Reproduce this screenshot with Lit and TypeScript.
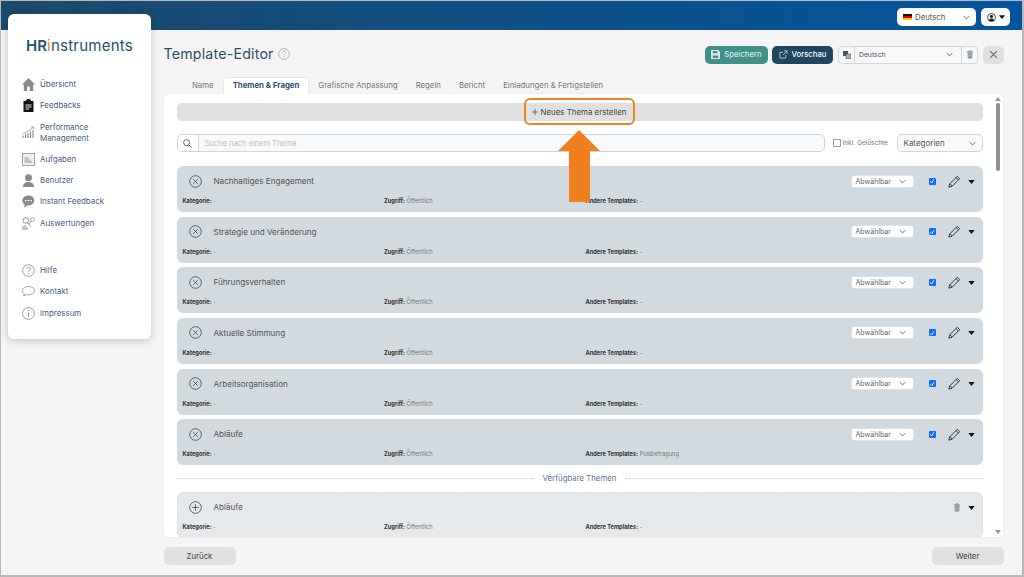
import { LitElement, html, css, svg } from "lit";
import { customElement } from "lit/decorators.js";

const chevron = html`<svg class="chev" viewBox="0 0 10 6"><path d="M1 1l4 4 4-4" fill="none" stroke="currentColor" stroke-width="1.2"/></svg>`;
const caret = html`<svg class="caret" viewBox="0 0 8 5"><path d="M0 0h8L4 5z" fill="#111"/></svg>`;
const pencil = html`<svg class="pencil" viewBox="0 0 12 12"><path d="M8.600 1.200l2.200 2.200-7 7-3 .8.8-3zM7.400 2.400l2.200 2.200M1.800 8l2.200 2.200" fill="none" stroke="#333" stroke-width=".9"/></svg>`;
const trash = html`<svg class="trash" viewBox="0 0 10 11"><path d="M1 2.200h8M3.500 2V1h3v1" fill="none" stroke="#777" stroke-width=".9"/><path d="M1.800 3h6.400l-.5 7.500H2.300z" fill="#8b8f93"/><path d="M3.800 4.500v4.500M6.200 4.500v4.500" stroke="#e7eaed" stroke-width=".6"/></svg>`;

const navIcons: Record<string, unknown> = {
  home: svg`<path d="M6.500 0L0 6.500h1.800V13h3.400V8.500h2.600V13h3.400V6.500H13z" fill="#8a8a8a"/>`,
  clip: svg`<path d="M1.500 2h2.300C4 .8 5 0 6.500 0S9 .8 9.200 2h2.300v11h-10z" fill="#111"/><path d="M3.500 6h6M3.500 8h6M3.500 10h3.500" stroke="#fff" stroke-width=".9"/>`,
  chart: svg`<path d="M1 12V9.500M3.500 12V8M6 12V7M8.500 12V5.500M11 12V4" stroke="#8a8a8a" stroke-width="1.100"/><path d="M.5 7.500C4 6.500 8 4.500 11.500 1M9 1h2.700v2.500" fill="none" stroke="#8a8a8a" stroke-width=".7"/>`,
  doc: svg`<rect x=".5" y=".5" width="12" height="12" fill="#f1f1f1" stroke="#8a8a8a" stroke-width=".8"/><path d="M2.500 5h4M2.500 7h6M2.500 9h7.500" stroke="#8a8a8a" stroke-width=".9"/>`,
  user: svg`<circle cx="6.500" cy="3.700" r="3.500" fill="#8a8a8a"/><path d="M1 13c0-3.500 2-5 5.500-5s5.500 1.500 5.500 5z" fill="#8a8a8a"/>`,
  chat: svg`<path d="M6.500.5C3 .5.300 2.700.300 5.600c0 1.700.9 3.100 2.300 4l-.4 3 3-2.100c.2 0 .5.100.8.100 3.500 0 6.200-2.200 6.200-5S10 .5 6.500.5z" fill="#8a8a8a"/><circle cx="3.800" cy="5.600" r=".8" fill="#fff"/><circle cx="6.500" cy="5.600" r=".8" fill="#fff"/><circle cx="9.200" cy="5.600" r=".8" fill="#fff"/>`,
  ana: svg`<circle cx="3.800" cy="3.500" r="2.800" fill="none" stroke="#8a8a8a" stroke-width=".9"/><circle cx="10.500" cy="2.500" r="1.900" fill="none" stroke="#8a8a8a" stroke-width=".7"/><path d="M5.500 6l3 3.500M9.500 4l-3 3M1 13V9M3 13V8M5 13v-3" stroke="#8a8a8a" stroke-width="1"/>`,
  help: svg`<circle cx="6.500" cy="6.500" r="5.800" fill="none" stroke="#8a8a8a" stroke-width=".8"/><path d="M4.700 5c0-1.200.8-1.900 1.900-1.900s1.800.7 1.800 1.700c0 1.300-1.800 1.500-1.800 2.900" fill="none" stroke="#8a8a8a" stroke-width=".9"/><circle cx="6.600" cy="9.600" r=".6" fill="#8a8a8a"/>`,
  talk: svg`<path d="M6.500 1.500C3 1.500.4 3.300.4 5.700c0 1.300.8 2.400 2 3.100L1.600 11l2.700-1.400c.7.200 1.400.2 2.200.2 3.400 0 6.100-1.800 6.100-4.100s-2.700-4.200-6.100-4.200z" fill="none" stroke="#8a8a8a" stroke-width=".8"/>`,
  info: svg`<circle cx="6.500" cy="6.500" r="5.900" fill="none" stroke="#8a8a8a" stroke-width=".8"/><path d="M6.500 5.500v4.500" stroke="#8a8a8a" stroke-width="1"/><circle cx="6.500" cy="3.500" r=".7" fill="#8a8a8a"/>`,
};

const mainNav = [
  { icon: "home", label: "Übersicht" },
  { icon: "clip", label: "Feedbacks" },
  { icon: "chart", label: "Performance Management", tall: true },
  { icon: "doc", label: "Aufgaben" },
  { icon: "user", label: "Benutzer" },
  { icon: "chat", label: "Instant Feedback" },
  { icon: "ana", label: "Auswertungen" },
];
const helpNav = [
  { icon: "help", label: "Hilfe" },
  { icon: "talk", label: "Kontakt" },
  { icon: "info", label: "Impressum" },
];

const topics = [
  { title: "Nachhaltiges Engagement", other: "-" },
  { title: "Strategie und Veränderung", other: "-" },
  { title: "Führungsverhalten", other: "-" },
  { title: "Aktuelle Stimmung", other: "-" },
  { title: "Arbeitsorganisation", other: "-" },
  { title: "Abläufe", other: "Pulsbefragung" },
];

@customElement("app-root")
export class AppRoot extends LitElement {
  static styles = css`
    :host {
      display: block;
      position: relative;
      width: 1024px;
      height: 577px;
      overflow: hidden;
      box-sizing: border-box;
      background: #f4f4f4;
      border: solid #b9b9b9;
      border-width: 1px 2px 2px 1px;
      font-family: Inter, "Open Sans", sans-serif;
      color: #3c3f44;
    }
    svg { display: block; flex: none; }
    .topbar {
      height: 29px;
      box-sizing: border-box;
      background: linear-gradient(90deg, #1c4a6b, #03559f);
      display: flex;
      justify-content: flex-end;
      align-items: flex-start;
      gap: 5px;
      padding: 7px 12px 0 0;
    }
    .pill {
      height: 18px;
      background: #fff;
      border-radius: 5px;
      display: flex;
      align-items: center;
      box-sizing: border-box;
      font-size: 7.800px;
      color: #555;
    }
    .pill.lang { width: 79px; padding: 0 6px 0 6px; gap: 3px; }
    .flag { width: 9px; height: 6px; background: linear-gradient(#111 33%, #d00 33% 66%, #fc0 66%); }
    .pill.lang .chev { margin-left: auto; }
    .chev { width: 7px; height: 5px; color: #555; }
    .pill.user { width: 29px; padding-left: 6px; gap: 3px; }
    .caret { width: 6px; height: 4px; }
    .page { display: flex; align-items: flex-start; height: 546px; }
    .side {
      flex: none;
      width: 143px;
      height: 325px;
      margin: -16px 0 0 7px;
      background: #fff;
      border-radius: 6px;
      box-shadow: 0 2px 8px rgba(0, 0, 0, .18);
      box-sizing: border-box;
      padding: 22px 0 0 14px;
      position: relative;
    }
    .logo {
      font-size: 15px;
      color: #24536f;
      letter-spacing: .25px;
      height: 38px;
      padding-left: 4px;
      white-space: nowrap;
    }
    .logo b { font-weight: 600; letter-spacing: 0; }
    .logo i { font-style: normal; color: #ee7f22; }
    .nav { display: flex; flex-direction: column; }
    .nav.help { margin-top: 26px; }
    .nav a {
      height: 21.300px;
      display: flex;
      align-items: center;
      gap: 5px;
      font-size: 7.900px;
      line-height: 11px;
      color: #44617f;
    }
    .nav a.tall { height: 32px; }
    .nav a.tall span { width: 70px; }
    .nav svg { width: 13px; height: 13px; }
    .main { flex: 1; min-width: 0; padding: 0 0 0 6px; margin-left: 6.500px; }
    .head { display: flex; align-items: center; height: 47px; padding: 0 18px 0 0; }
    h1 {
      margin: 0;
      font-size: 14.200px;
      font-weight: 400;
      color: #2f5068;
      letter-spacing: .2px;
    }
    .q { width: 12px; height: 12px; margin-left: 4px; }
    .acts { margin: 2px 0 0 auto; display: flex; align-items: center; gap: 4px; }
    .btn {
      height: 18px;
      border-radius: 5px;
      display: flex;
      align-items: center;
      justify-content: center;
      gap: 4px;
      box-sizing: border-box;
      font-size: 7.700px;
      font-weight: 500;
      color: #fff;
    }
    .btn svg { width: 9px; height: 9px; }
    .btn.save { width: 63px; background: #41918a; color: #d6ece9; }
    .btn.prev { width: 61px; background: #1f4560; }
    .langs {
      width: 140px;
      height: 18px;
      margin-left: 1px;
      border: 1px solid #cfd8e0;
      border-radius: 4px;
      box-sizing: border-box;
      display: flex;
      background: #f6f8f9;
      font-size: 6.800px;
      color: #555;
    }
    .langs > div { display: flex; align-items: center; justify-content: center; }
    .langs .ic { width: 15px; border-right: 1px solid #cfd8e0; }
    .langs .sel { flex: 1; justify-content: space-between; padding: 0 8px 0 4px; }
    .langs .bin { width: 15px; border-left: 1px solid #cfd8e0; }
    .trash { width: 8px; height: 9px; }
    .btn.close { width: 21px; background: #e0e0e0; margin-left: 1px; }
    .tabs { display: flex; height: 17px; padding-left: 19.500px; font-size: 7.800px; color: #777; }
    .tabs span { padding: 0 9px 1.500px; display: flex; align-items: center; white-space: nowrap; }
    .tabs .on {
      background: #fff;
      border: 1px solid #e8e8e8;
      border-bottom: 0;
      border-radius: 4px 4px 0 0;
      color: #2c5270;
      font-weight: 700;
    }
    .panel {
      width: 839px;
      height: 443px;
      background: #fff;
      border-radius: 4px 4px 0 4px;
      display: flex;
      overflow: hidden;
      box-shadow: 0 0 1px rgba(0, 0, 0, .2);
    }
    .scroll { flex: 1; height: 443px; overflow: hidden; padding: 9px 10px 0 13px; box-sizing: border-box; }
    .create {
      height: 18px;
      background: #e0e0e0;
      border-radius: 5px;
      display: flex;
      align-items: center;
      justify-content: center;
      gap: 2px;
      font-size: 7.900px;
      color: #444;
      position: relative;
    }
    .create .mark {
      position: absolute;
      left: 347px;
      top: -5px;
      width: 111px;
      height: 27px;
      box-sizing: border-box;
      border: 2.500px solid #ee8322;
      border-radius: 6px;
    }
    .filter { display: flex; align-items: center; height: 18px; margin: 13px 0 14px; font-size: 6.500px; color: #777; }
    .search {
      width: 648px;
      height: 18px;
      box-sizing: border-box;
      border: 1px solid #ccd6de;
      border-radius: 5px;
      display: flex;
      background: #f8f9fa;
    }
    .search .mag { width: 20px; border-right: 1px solid #ccd6de; display: flex; align-items: center; justify-content: center; background: #fff; border-radius: 5px 0 0 5px; }
    .search .mag svg { width: 9px; height: 9px; }
    .search .ph { padding-left: 6px; font-size: 7.500px; color: #b5bec6; display: flex; align-items: center; }
    .box { width: 6px; height: 6px; border: 1px solid #999; border-radius: 1px; margin: 0 2px 0 8px; background: #fff; }
    .cats {
      margin-left: auto;
      width: 86px;
      height: 18px;
      box-sizing: border-box;
      border: 1px solid #ccd6de;
      border-radius: 5px;
      display: flex;
      align-items: center;
      justify-content: space-between;
      padding: 0 6px;
      font-size: 8px;
      color: #555;
      background: #f8f9fa;
    }
    .list { display: flex; flex-direction: column; gap: 4.670px; }
    .row { height: 46px; background: #d2d9df; border-radius: 6px; box-sizing: border-box; padding: 8px 8px 0 12px; }
    .row.free { background: #e6e9ec; border: 1px dashed #d8dde2; margin-top: 5px; padding: 7px 7px 0 11px; }
    .line { display: flex; align-items: center; height: 14px; }
    .line .circ { width: 13px; height: 13px; margin-right: 12px; }
    .line .name { font-size: 8.100px; color: #555; }
    .line .right { margin-left: auto; display: flex; align-items: center; }
    .drop {
      width: 63px;
      height: 13px;
      box-sizing: border-box;
      background: #fff;
      border: 1px solid #dde2e6;
      border-radius: 3px;
      display: flex;
      align-items: center;
      justify-content: space-between;
      padding: 0 7px 0 4px;
      font-size: 7px;
      color: #666;
    }
    .check {
      width: 7px;
      height: 7px;
      margin-left: 15px;
      background: #0d6efd;
      border-radius: 1px;
      display: flex;
      align-items: center;
      justify-content: center;
    }
    .check svg { width: 6px; height: 6px; }
    .pencil { width: 13px; height: 13px; margin-left: 12px; }
    .row .caret { margin-left: 7px; margin-top: 1px; width: 7px; }
    .meta {
      display: grid;
      grid-template-columns: repeat(3, 201.500px);
      margin: 9px 0 0 -6px;
      font-size: 5.700px;
      line-height: 8px;
      color: #777;
    }
    .meta b { color: #333; font-weight: 700; }
    .sep { display: flex; align-items: center; gap: 9px; height: 18px; font-size: 7.800px; color: #5a7590; white-space: nowrap; margin-top: 4px; }
    .sep::before, .sep::after { content: ""; flex: 1; border-top: 1px dotted #bccad6; }
    .bar { width: 10px; flex: none; display: flex; flex-direction: column; align-items: center; padding: 3px 0; box-sizing: border-box; justify-content: space-between; }
    .bar .track { flex: 1; width: 100%; margin-top: 2px; }
    .bar .thumb { width: 4px; height: 68px; border-radius: 2px; background: #8e8e8e; margin: 0 auto; }
    .bar svg { width: 6px; height: 4px; }
    .foot { display: flex; justify-content: space-between; padding: 10px 0 0 0; width: 840px; }
    .foot span {
      width: 72px;
      height: 18px;
      background: #e0e0e0;
      border-radius: 5px;
      display: flex;
      align-items: center;
      justify-content: center;
      font-size: 7.800px;
      color: #444;
    }
    .arrow { position: absolute; left: 557px; top: 129px; width: 42px; height: 72px; }
  `;

  private renderNavItem(n: { icon: string; label: string; tall?: boolean }) {
    return html`<a class=${n.tall ? "tall" : ""}>
      <svg viewBox="0 0 13 13">${navIcons[n.icon]}</svg><span>${n.label}</span>
    </a>`;
  }

  private renderMeta(other: string) {
    return html`<div class="meta">
      <div><b>Kategorie:</b> -</div>
      <div><b>Zugriff:</b> Öffentlich</div>
      <div><b>Andere Templates:</b> ${other}</div>
    </div>`;
  }

  private renderTopic(t: { title: string; other: string }) {
    return html`<div class="row">
      <div class="line">
        <svg class="circ" viewBox="0 0 13 13"><circle cx="6.500" cy="6.500" r="5.800" fill="none" stroke="#444" stroke-width=".8"/><path d="M4.300 4.300l4.400 4.400M8.700 4.300l-4.400 4.400" stroke="#444" stroke-width=".8"/></svg>
        <span class="name">${t.title}</span>
        <div class="right">
          <div class="drop">Abwählbar ${chevron}</div>
          <div class="check"><svg viewBox="0 0 8 8"><path d="M1.500 4.500l2 2 3-4.500" fill="none" stroke="#fff" stroke-width="1.300"/></svg></div>
          ${pencil} ${caret}
        </div>
      </div>
      ${this.renderMeta(t.other)}
    </div>`;
  }

  render() {
    return html`
      <div class="topbar">
        <div class="pill lang"><span class="flag"></span>Deutsch ${chevron}</div>
        <div class="pill user">
          <svg width="9" height="9" viewBox="0 0 9 9"><circle cx="4.500" cy="4.500" r="4" fill="none" stroke="#222" stroke-width=".8"/><circle cx="4.500" cy="3.400" r="1.600" fill="#222"/><path d="M1.800 7.400c.5-1.500 1.500-2 2.700-2s2.200.5 2.700 2c-1.500 1.200-3.900 1.200-5.400 0z" fill="#222"/></svg>
          ${caret}
        </div>
      </div>
      <div class="page">
        <aside class="side">
          <div class="logo"><b>HR</b><i>i</i>nstruments</div>
          <div class="nav">${mainNav.map((n) => this.renderNavItem(n))}</div>
          <div class="nav help">${helpNav.map((n) => this.renderNavItem(n))}</div>
        </aside>
        <div class="main">
          <div class="head">
            <h1>Template-Editor</h1>
            <svg class="q" viewBox="0 0 12 12"><circle cx="6" cy="6" r="5.400" fill="none" stroke="#a9b4bd" stroke-width="1"/><path d="M4.400 4.700c0-1 .7-1.600 1.600-1.600s1.600.6 1.600 1.500c0 1.100-1.600 1.300-1.600 2.500" fill="none" stroke="#a9b4bd" stroke-width=".9"/><circle cx="6" cy="8.700" r=".6" fill="#a9b4bd"/></svg>
            <div class="acts">
              <div class="btn save"><svg viewBox="0 0 10 10"><path d="M0 0h8l2 2v8H0z" fill="#d6ece9"/><path d="M2 1h5v2.500H2zM2 6h6v3H2z" fill="#41918a"/></svg>Speichern</div>
              <div class="btn prev"><svg viewBox="0 0 10 10"><path d="M7.500 5.500V9H1V2.500h3.500M5.500 1H9v3.500M9 1L4.500 5.500" fill="none" stroke="#d9e4ec" stroke-width=".8"/></svg>Vorschau</div>
              <div class="langs">
                <div class="ic"><svg width="8" height="8" viewBox="0 0 8 8"><rect width="5" height="5" fill="#555"/><rect x="3" y="3" width="5" height="5" fill="#aaa" stroke="#444" stroke-width=".5"/></svg></div>
                <div class="sel">Deutsch ${chevron}</div>
                <div class="bin">${trash}</div>
              </div>
              <div class="btn close"><svg viewBox="0 0 8 8"><path d="M1 1l6 6M7 1L1 7" stroke="#666" stroke-width=".9"/></svg></div>
            </div>
          </div>
          <div class="tabs">
            <span>Name</span><span class="on">Themen &amp; Fragen</span><span>Grafische Anpassung</span><span>Regeln</span><span>Bericht</span><span>Einladungen &amp; Fertigstellen</span>
          </div>
          <div class="panel">
            <div class="scroll">
              <div class="create">
                <svg width="6" height="6" viewBox="0 0 7 7"><path d="M3.500 0v7M0 3.500h7" stroke="#444" stroke-width=".8"/></svg>
                Neues Thema erstellen
                <div class="mark"></div>
              </div>
              <div class="filter">
                <div class="search">
                  <div class="mag"><svg viewBox="0 0 10 10"><circle cx="4" cy="4" r="3.300" fill="none" stroke="#555" stroke-width="1"/><path d="M6.500 6.500L9.500 9.500" stroke="#555" stroke-width="1.100"/></svg></div>
                  <div class="ph">Suche nach einem Thema</div>
                </div>
                <span class="box"></span>Inkl. Gelöschte
                <div class="cats">Kategorien ${chevron}</div>
              </div>
              <div class="list">
                ${topics.map((t) => this.renderTopic(t))}
              </div>
              <div class="sep">Verfügbare Themen</div>
              <div class="row free">
                <div class="line">
                  <svg class="circ" viewBox="0 0 13 13"><circle cx="6.500" cy="6.500" r="5.800" fill="none" stroke="#444" stroke-width=".8"/><path d="M6.500 3.300v6.400M3.300 6.500h6.400" stroke="#444" stroke-width=".8"/></svg>
                  <span class="name">Abläufe</span>
                  <div class="right"><span class="trash">${trash}</span>${caret}</div>
                </div>
                ${this.renderMeta("-")}
              </div>
            </div>
            <div class="bar">
              <svg viewBox="0 0 6 4"><path d="M3 0l3 4H0z" fill="#999"/></svg>
              <div class="track"><div class="thumb"></div></div>
              <svg viewBox="0 0 6 4"><path d="M0 0h6L3 4z" fill="#999"/></svg>
            </div>
          </div>
          <div class="foot"><span>Zurück</span><span>Weiter</span></div>
        </div>
      </div>
      <svg class="arrow" viewBox="0 0 42 72"><path d="M21 0l21 21H32v51H11V21H0z" fill="#f0801f"/></svg>
    `;
  }
}
